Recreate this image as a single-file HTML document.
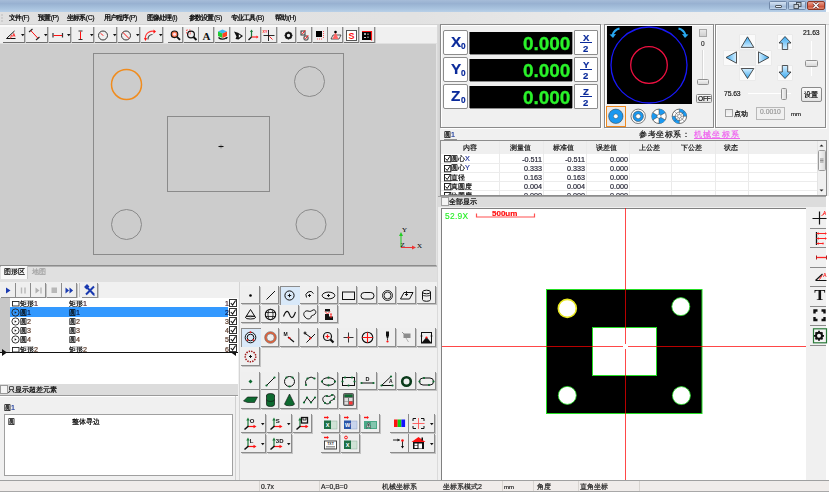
<!DOCTYPE html>
<html><head><meta charset="utf-8"><style>
*{margin:0;padding:0;box-sizing:border-box}
html,body{width:829px;height:493px;overflow:hidden;background:#fff;font-family:"Liberation Sans",sans-serif;font-size:8px;color:#000}
.a{position:absolute}
.b{position:absolute;background:#f0f0f0;border-top:1px solid #fff;border-left:1px solid #fff;border-right:1px solid #a0a0a0;border-bottom:1px solid #a0a0a0;box-shadow:1px 1px 0 #696969}
.t{position:absolute;white-space:nowrap;line-height:1;-webkit-text-stroke:0.2px currentColor;will-change:transform}
.m{position:absolute;white-space:nowrap;line-height:1;font-size:7.3px;top:14px;color:#000;letter-spacing:-0.85px;will-change:transform;-webkit-text-stroke:0.25px #000}
.m i{font-style:normal;font-size:6.9px;letter-spacing:-0.45px;margin-left:0.4px;-webkit-text-stroke:0.15px #000}
svg{position:absolute;overflow:visible}
.pnl{position:absolute;border:1px solid #a0a0a0;border-right-color:#fff;border-bottom-color:#fff;box-shadow:inset -1px -1px 0 #a0a0a0, inset 1px 1px 0 #fff}
</style></head><body>
<div class="a" style="left:0px;top:0px;width:826px;height:12px;background:linear-gradient(#a6bcd8 0,#98b1d1 30%,#a8c2de 70%,#b8d0e8 100%)"></div>
<div class="a" style="left:769px;top:1px;width:18px;height:9px;border:1px solid #7088a8;border-radius:1.5px;background:linear-gradient(#d4e2f2,#b0c6e0 50%,#9ab4d4 51%,#c0d4ea)"></div>
<div class="a" style="left:788px;top:1px;width:18px;height:9px;border:1px solid #7088a8;border-radius:1.5px;background:linear-gradient(#d4e2f2,#b0c6e0 50%,#9ab4d4 51%,#c0d4ea)"></div>
<div class="a" style="left:775px;top:5px;width:7px;height:3px;background:#e8eef6;border:1px solid #505860;border-radius:1px"></div>
<svg width="18" height="9" viewBox="0 0 18 9" style="left:788px;top:1px;"><rect x="8.5" y="1.5" width="4.5" height="4" fill="#c8d0d8" stroke="#404850" stroke-width="0.9"/><rect x="6" y="3.5" width="4.5" height="4" fill="#c8d0d8" stroke="#404850" stroke-width="0.9"/></svg>
<div class="a" style="left:807px;top:1px;width:18px;height:9px;border:1px solid #8a3828;border-radius:2px;background:linear-gradient(#e8a090,#d86850 50%,#c84830 51%,#e08870)"></div>
<svg width="18" height="9" viewBox="0 0 18 9" style="left:807px;top:1px;"><path d="M6.5 2L11.5 7M11.5 2L6.5 7" stroke="#5a2a2a" stroke-width="2.6"/><path d="M6.5 2L11.5 7M11.5 2L6.5 7" stroke="#fff" stroke-width="1.5"/></svg>
<div class="a" style="left:0px;top:11.5px;width:829px;height:13px;background:linear-gradient(90deg,#e0e0e0,#e2e2e2 50%,#ececec 80%,#f0f0f0)"></div>
<div class="a" style="left:0px;top:24px;width:829px;height:1.2px;background:#d2d2d2"></div>
<svg width="4" height="12" viewBox="0 0 4 12" style="left:0px;top:12px;"><path d="M2 2.5v1M2 5.5v1M2 8.5v1" stroke="#999" stroke-width="1"/></svg>
<div class="m" style="left:9px">文件<i>(F)</i></div>
<div class="m" style="left:38px">预置<i>(P)</i></div>
<div class="m" style="left:67px">坐标系<i>(C)</i></div>
<div class="m" style="left:104px">用户程序<i>(P)</i></div>
<div class="m" style="left:147px">图像处理<i>(I)</i></div>
<div class="m" style="left:189px">参数设置<i>(S)</i></div>
<div class="m" style="left:231px">专业工具<i>(B)</i></div>
<div class="m" style="left:275px">帮助<i>(H)</i></div>
<div class="a" style="left:0px;top:25px;width:438px;height:19px;background:#f0f0f0"></div>
<div class="a" style="left:0px;top:25px;width:438px;height:1.5px;background:#fafafa"></div>
<div class="a" style="left:3px;top:27px;width:22px;height:16px;background:#efefef;border-right:1px solid #8c8c8c;border-bottom:1px solid #6c6c6c;box-shadow:1px 0 0 #c8c8c8"></div>
<div class="a" style="left:26px;top:27px;width:22px;height:16px;background:#efefef;border-right:1px solid #8c8c8c;border-bottom:1px solid #6c6c6c;box-shadow:1px 0 0 #c8c8c8"></div>
<div class="a" style="left:49px;top:27px;width:22px;height:16px;background:#efefef;border-right:1px solid #8c8c8c;border-bottom:1px solid #6c6c6c;box-shadow:1px 0 0 #c8c8c8"></div>
<div class="a" style="left:72px;top:27px;width:22px;height:16px;background:#efefef;border-right:1px solid #8c8c8c;border-bottom:1px solid #6c6c6c;box-shadow:1px 0 0 #c8c8c8"></div>
<div class="a" style="left:95px;top:27px;width:22px;height:16px;background:#efefef;border-right:1px solid #8c8c8c;border-bottom:1px solid #6c6c6c;box-shadow:1px 0 0 #c8c8c8"></div>
<div class="a" style="left:118px;top:27px;width:22px;height:16px;background:#efefef;border-right:1px solid #8c8c8c;border-bottom:1px solid #6c6c6c;box-shadow:1px 0 0 #c8c8c8"></div>
<div class="a" style="left:141px;top:27px;width:22px;height:16px;background:#efefef;border-right:1px solid #8c8c8c;border-bottom:1px solid #6c6c6c;box-shadow:1px 0 0 #c8c8c8"></div>
<div class="a" style="left:168px;top:27px;width:15px;height:16px;background:#efefef;border-right:1px solid #8c8c8c;border-bottom:1px solid #6c6c6c;box-shadow:1px 0 0 #c8c8c8"></div>
<div class="a" style="left:184px;top:27px;width:15px;height:16px;background:#efefef;border-right:1px solid #8c8c8c;border-bottom:1px solid #6c6c6c;box-shadow:1px 0 0 #c8c8c8"></div>
<div class="a" style="left:199px;top:27px;width:15px;height:16px;background:#efefef;border-right:1px solid #8c8c8c;border-bottom:1px solid #6c6c6c;box-shadow:1px 0 0 #c8c8c8"></div>
<div class="a" style="left:215px;top:27px;width:15px;height:16px;background:#efefef;border-right:1px solid #8c8c8c;border-bottom:1px solid #6c6c6c;box-shadow:1px 0 0 #c8c8c8"></div>
<div class="a" style="left:231px;top:27px;width:15px;height:16px;background:#efefef;border-right:1px solid #8c8c8c;border-bottom:1px solid #6c6c6c;box-shadow:1px 0 0 #c8c8c8"></div>
<div class="a" style="left:246px;top:27px;width:15px;height:16px;background:#efefef;border-right:1px solid #8c8c8c;border-bottom:1px solid #6c6c6c;box-shadow:1px 0 0 #c8c8c8"></div>
<div class="a" style="left:262px;top:27px;width:15px;height:16px;background:#efefef;border-right:1px solid #8c8c8c;border-bottom:1px solid #6c6c6c;box-shadow:1px 0 0 #c8c8c8"></div>
<div class="a" style="left:281px;top:27px;width:15px;height:16px;background:#efefef;border-right:1px solid #8c8c8c;border-bottom:1px solid #6c6c6c;box-shadow:1px 0 0 #c8c8c8"></div>
<div class="a" style="left:297px;top:27px;width:15px;height:16px;background:#efefef;border-right:1px solid #8c8c8c;border-bottom:1px solid #6c6c6c;box-shadow:1px 0 0 #c8c8c8"></div>
<div class="a" style="left:313px;top:27px;width:15px;height:16px;background:#efefef;border-right:1px solid #8c8c8c;border-bottom:1px solid #6c6c6c;box-shadow:1px 0 0 #c8c8c8"></div>
<div class="a" style="left:328px;top:27px;width:15px;height:16px;background:#efefef;border-right:1px solid #8c8c8c;border-bottom:1px solid #6c6c6c;box-shadow:1px 0 0 #c8c8c8"></div>
<div class="a" style="left:344px;top:27px;width:15px;height:16px;background:#efefef;border-right:1px solid #8c8c8c;border-bottom:1px solid #6c6c6c;box-shadow:1px 0 0 #c8c8c8"></div>
<div class="a" style="left:360px;top:27px;width:15px;height:16px;background:#efefef;border-right:1px solid #8c8c8c;border-bottom:1px solid #6c6c6c;box-shadow:1px 0 0 #c8c8c8"></div>
<svg width="4" height="3" viewBox="0 0 4 3" style="left:21px;top:34px;"><path d="M0 0h3.5l-1.75 2.2z" fill="#111"/></svg>
<svg width="4" height="3" viewBox="0 0 4 3" style="left:44px;top:34px;"><path d="M0 0h3.5l-1.75 2.2z" fill="#111"/></svg>
<svg width="4" height="3" viewBox="0 0 4 3" style="left:67px;top:34px;"><path d="M0 0h3.5l-1.75 2.2z" fill="#111"/></svg>
<svg width="4" height="3" viewBox="0 0 4 3" style="left:90px;top:34px;"><path d="M0 0h3.5l-1.75 2.2z" fill="#111"/></svg>
<svg width="4" height="3" viewBox="0 0 4 3" style="left:113px;top:34px;"><path d="M0 0h3.5l-1.75 2.2z" fill="#111"/></svg>
<svg width="4" height="3" viewBox="0 0 4 3" style="left:136px;top:34px;"><path d="M0 0h3.5l-1.75 2.2z" fill="#111"/></svg>
<svg width="4" height="3" viewBox="0 0 4 3" style="left:159px;top:34px;"><path d="M0 0h3.5l-1.75 2.2z" fill="#111"/></svg>
<svg width="22" height="16" viewBox="0 0 22 16" style="left:3px;top:27px;"><path d="M3.5 11.5L11.5 4M3.5 11.5h9" stroke="#111" stroke-width="1" fill="none"/><path d="M7.5 11.5L8.5 8M9.5 9.5L10.8 6.5 12 9.5M10 8.8h1.6" stroke="#f22" stroke-width="0.9" fill="none"/></svg>
<svg width="22" height="16" viewBox="0 0 22 16" style="left:26px;top:27px;"><path d="M3 5l3.5-3M10 13l3.5-3" stroke="#222" stroke-width="1.1"/><path d="M4.8 3.6l7 7.5" stroke="#f11" stroke-width="1"/></svg>
<svg width="22" height="16" viewBox="0 0 22 16" style="left:49px;top:27px;"><path d="M4 6v4.5M13.5 6v4.5" stroke="#333" stroke-width="1.2"/><path d="M4.5 8.5h8.5" stroke="#f11" stroke-width="1"/></svg>
<svg width="22" height="16" viewBox="0 0 22 16" style="left:72px;top:27px;"><path d="M6.5 4h4M6.5 12.5h4" stroke="#333" stroke-width="1.2"/><path d="M8.5 4.5v7.5" stroke="#f11" stroke-width="1"/></svg>
<svg width="22" height="16" viewBox="0 0 22 16" style="left:95px;top:27px;"><circle cx="8" cy="8.5" r="4.5" fill="none" stroke="#222" stroke-width="0.9"/><path d="M5.8 6.3l2.4 2.4" stroke="#f11" stroke-width="1"/></svg>
<svg width="22" height="16" viewBox="0 0 22 16" style="left:118px;top:27px;"><circle cx="8" cy="8.5" r="4.5" fill="none" stroke="#222" stroke-width="0.9"/><path d="M5 5.5l6 6" stroke="#f11" stroke-width="1"/></svg>
<svg width="22" height="16" viewBox="0 0 22 16" style="left:141px;top:27px;"><path d="M4.5 12.5A7 7 0 0 1 13.5 4.5" fill="none" stroke="#f33" stroke-width="1.1"/><path d="M7 12.5A4.5 4.5 0 0 1 11.5 7.5" fill="none" stroke="#444" stroke-width="1.1"/><path d="M12.5 2.5l2.5 2-2.5 2.2z M3 11l3.2 0.3-1.8 2.7z" fill="#f11"/></svg>
<svg width="15" height="16" viewBox="0 0 15 16" style="left:168px;top:27px;"><circle cx="6.5" cy="7.3" r="3.3" fill="#fa7a50" stroke="#111" stroke-width="1.1"/><circle cx="6.5" cy="7.3" r="1.5" fill="#fde"/><path d="M9 9.8l3 3" stroke="#111" stroke-width="1.9"/></svg>
<svg width="15" height="16" viewBox="0 0 15 16" style="left:184px;top:27px;"><rect x="2.5" y="3" width="4" height="4" fill="none" stroke="#f55" stroke-width="0.9" stroke-dasharray="1.5 1"/><circle cx="7" cy="7.5" r="3.4" fill="none" stroke="#111" stroke-width="1.2"/><path d="M9.5 10l3 3" stroke="#111" stroke-width="2"/></svg>
<svg width="15" height="16" viewBox="0 0 15 16" style="left:199px;top:27px;"><text x="7.5" y="12.5" font-family="Liberation Serif" font-weight="bold" font-size="11" text-anchor="middle" fill="#111">A</text></svg>
<svg width="15" height="16" viewBox="0 0 15 16" style="left:215px;top:27px;"><path d="M3 4.5l4.5-2 4.5 2-4.5 2z" fill="#39b8f0"/><path d="M3 4.5v4.5l4.5 2V6.5z" fill="#22cc33"/><path d="M12 4.5v4.5l-4.5 2V6.5z" fill="#ff4020"/><path d="M3.5 10.5q3 3 8 0.5" stroke="#111" stroke-width="1.3" fill="none"/><path d="M10.5 10l2.5 0.3-1.5 2z" fill="#111"/></svg>
<svg width="15" height="16" viewBox="0 0 15 16" style="left:231px;top:27px;"><path d="M3 4.5l4 1.2 5 3.3-4.5 3.5-3-0.5 1-2.5z" fill="#111"/><path d="M7.8 7.2l2.2 1.8-2.2 1.8z" fill="#fff"/></svg>
<svg width="15" height="16" viewBox="0 0 15 16" style="left:246px;top:27px;"><path d="M5.5 10V3.5" stroke="#1a7a3a" stroke-width="1.2"/><path d="M4 5l1.5-2.5L7 5z" fill="#1a7a3a"/><path d="M5.5 10h6" stroke="#f22" stroke-width="1.2"/><path d="M10.5 8.5l2 1.5-2 1.5z" fill="#f22"/><path d="M5.5 10l-3 3" stroke="#111" stroke-width="1.3"/></svg>
<svg width="15" height="16" viewBox="0 0 15 16" style="left:262px;top:27px;"><path d="M6.5 3v11M1.5 8.5h11" stroke="#111" stroke-width="0.9"/><path d="M7.5 9.5l3 3" stroke="#f22" stroke-width="1"/><text x="0.5" y="5.5" font-size="3.8" fill="#f22" font-weight="bold">XY</text></svg>
<svg width="15" height="16" viewBox="0 0 15 16" style="left:281px;top:27px;"><circle cx="7.5" cy="8.5" r="2.6" fill="none" stroke="#111" stroke-width="1.8"/><path d="M7.5 4.5v1.5M7.5 11v1.5M3.5 8.5h1.5M10 8.5h1.5M4.7 5.7l1 1M9.3 10.3l1 1M10.3 5.7l-1 1M5.7 10.3l-1 1" stroke="#111" stroke-width="1.6"/></svg>
<svg width="15" height="16" viewBox="0 0 15 16" style="left:297px;top:27px;"><rect x="4" y="4" width="4" height="4" fill="none" stroke="#333" stroke-width="1"/><rect x="7" y="9" width="4" height="4" fill="none" stroke="#333" stroke-width="1" rx="1"/><path d="M4.5 5.5l1.2 1.2 2.5-3.5M7.5 10.5l1.2 1.2 2.5-3.5" stroke="#f22" stroke-width="1" fill="none"/></svg>
<svg width="15" height="16" viewBox="0 0 15 16" style="left:313px;top:27px;"><rect x="3" y="4" width="6" height="6" fill="#000"/><path d="M10.5 4v7M4 12h6" stroke="#f44" stroke-width="0.9" stroke-dasharray="1 1"/></svg>
<svg width="15" height="16" viewBox="0 0 15 16" style="left:328px;top:27px;"><path d="M3 12l2-4h8l-2 4z" fill="none" stroke="#333" stroke-width="0.8"/><path d="M7.5 5l3 7h-6z" fill="#f66"/><circle cx="7.5" cy="5" r="1.3" fill="#000"/></svg>
<svg width="15" height="16" viewBox="0 0 15 16" style="left:344px;top:27px;"><rect x="2.5" y="3.5" width="10" height="10" fill="#fff" stroke="#555" stroke-width="1"/><text x="7.5" y="12" font-size="9" font-weight="bold" text-anchor="middle" fill="#f11">S</text></svg>
<svg width="15" height="16" viewBox="0 0 15 16" style="left:360px;top:27px;"><rect x="2" y="4" width="9" height="9" fill="#000"/><path d="M2 4.5h9.5v9" stroke="#f11" stroke-width="1.2" fill="none"/><path d="M4 7h2M5 6v2M4 10.5h2M8 6.5v1.5M8 9.5v1.5" stroke="#fff" stroke-width="0.8"/></svg>
<div class="a" style="left:0px;top:43px;width:438px;height:1px;background:#e0e0e0"></div>
<div class="a" style="left:0px;top:44px;width:437px;height:222px;background:#cccccc;border-right:1px solid #e4e4e4;border-bottom:1px solid #8c8c8c"></div>
<svg width="438" height="222" viewBox="0 0 438 222" style="left:0px;top:44px;">
 <rect x="93.5" y="9.5" width="250" height="201" fill="none" stroke="#8a8a8a" stroke-width="1"/>
 <rect x="167.5" y="72.5" width="102" height="75" fill="none" stroke="#8a8a8a" stroke-width="1"/>
 <circle cx="126.5" cy="40.5" r="15" fill="none" stroke="#f08c1e" stroke-width="1.5"/>
 <circle cx="309.5" cy="37.5" r="15" fill="none" stroke="#8a8a8a" stroke-width="1"/>
 <circle cx="126.5" cy="180.5" r="15" fill="none" stroke="#8a8a8a" stroke-width="1"/>
 <circle cx="311" cy="180.5" r="15" fill="none" stroke="#8a8a8a" stroke-width="1"/>
 <path d="M221 100.5v4" stroke="#888" stroke-width="1"/><path d="M218.5 102.5h5" stroke="#111" stroke-width="1.1"/>
 <path d="M401 203.5v-13" stroke="#2c2" stroke-width="1"/>
 <path d="M399 192l2-4 2 4z" fill="#2c2"/>
 <path d="M401 203.5h13" stroke="#e33" stroke-width="1"/>
 <path d="M412 201.5l4 2-4 2z" fill="#e33"/>
 <text x="402" y="188" font-size="7" font-family="Liberation Serif">Y</text>
 <text x="400.5" y="203" font-size="7" font-family="Liberation Serif">Z</text>
 <text x="417" y="203.5" font-size="7" font-family="Liberation Serif">X</text>
</svg>
<div class="a" style="left:0px;top:266px;width:437px;height:0.5px;background:#b0b0b0"></div>
<div class="a" style="left:0px;top:266.5px;width:437px;height:15.5px;background:#e0e0e0"></div>
<div class="a" style="left:1px;top:266px;width:27px;height:13px;background:#f8f8f8;border-right:1px solid #c8c8c8"></div>
<div class="t" style="left:4px;top:268px;font-size:7.2px">图形区</div>
<div class="t" style="left:32px;top:268px;font-size:7.2px;color:#a0a0a0">地图</div>
<div class="a" style="left:0px;top:282px;width:238px;height:198px;background:#f0f0f0"></div>
<div class="a" style="left:1px;top:283px;width:15px;height:15px;background:#efefef;border-right:1px solid #8c8c8c;border-bottom:1px solid #8c8c8c;box-shadow:1px 1px 0 #c4c4c4"></div>
<div class="a" style="left:16px;top:283px;width:15px;height:15px;background:#efefef;border-right:1px solid #8c8c8c;border-bottom:1px solid #8c8c8c;box-shadow:1px 1px 0 #c4c4c4"></div>
<div class="a" style="left:31px;top:283px;width:15px;height:15px;background:#efefef;border-right:1px solid #8c8c8c;border-bottom:1px solid #8c8c8c;box-shadow:1px 1px 0 #c4c4c4"></div>
<div class="a" style="left:47px;top:283px;width:15px;height:15px;background:#efefef;border-right:1px solid #8c8c8c;border-bottom:1px solid #8c8c8c;box-shadow:1px 1px 0 #c4c4c4"></div>
<div class="a" style="left:62px;top:283px;width:15px;height:15px;background:#efefef;border-right:1px solid #8c8c8c;border-bottom:1px solid #8c8c8c;box-shadow:1px 1px 0 #c4c4c4"></div>
<div class="a" style="left:82px;top:283px;width:16px;height:15px;background:#efefef;border-right:1px solid #8c8c8c;border-bottom:1px solid #8c8c8c;box-shadow:1px 1px 0 #c4c4c4"></div>
<div class="a" style="left:79px;top:283px;width:1px;height:14px;background:#c8c8c8"></div>
<svg width="15" height="15" viewBox="0 0 15 15" style="left:1px;top:283px;"><path d="M5 4.5v6l4.5-3z" fill="#1a3ab0"/></svg>
<svg width="15" height="15" viewBox="0 0 15 15" style="left:16px;top:283px;"><path d="M5.5 4.5v6M9 4.5v6" stroke="#b8b8b8" stroke-width="1.4"/></svg>
<svg width="15" height="15" viewBox="0 0 15 15" style="left:31px;top:283px;"><path d="M4.5 4.5v6l4-3z" fill="#b0b0b0"/><path d="M10 4.5v6" stroke="#b0b0b0" stroke-width="1.2"/></svg>
<svg width="15" height="15" viewBox="0 0 15 15" style="left:47px;top:283px;"><rect x="4.5" y="4.5" width="5.5" height="5.5" fill="#b8b8b8"/></svg>
<svg width="15" height="15" viewBox="0 0 15 15" style="left:62px;top:283px;"><path d="M3.5 4.5v6l3.6-3zM7.5 4.5v6l3.6-3z" fill="#1a3ab0"/></svg>
<svg width="16" height="15" viewBox="0 0 16 15" style="left:82px;top:283px;"><path d="M4 3.5l8 8M12 3.5l-8 8" stroke="#1a3ab0" stroke-width="2"/><path d="M3 4l2-2 1.5 1.5-2 2zM10 10l2.5 2.5" stroke="#1a3ab0" stroke-width="1.3" fill="#1a3ab0"/></svg>
<div class="a" style="left:0px;top:298px;width:238px;height:87px;background:#fff"></div>
<div class="a" style="left:0px;top:298px;width:10px;height:55px;background:#c8c8c8"></div>
<div class="a" style="left:10px;top:307px;width:218px;height:10px;background:#3399ff"></div>
<div class="a" style="left:0px;top:352px;width:238px;height:1px;background:#111"></div>
<svg width="238" height="8" viewBox="0 0 238 8" style="left:0px;top:349px;"><path d="M2 0l5 3.5-5 3.5z M236 0l-5 3.5 5 3.5z" fill="#111"/></svg>
<svg width="9" height="9" viewBox="0 0 9 9" style="left:11px;top:298.0px;"><rect x="1.5" y="3.5" width="6.5" height="4.5" fill="none" stroke="#222" stroke-width="0.9"/></svg>
<div class="t" style="left:20px;top:300.0px;font-size:7.2px">矩形<span style="color:#4a2a3a">1</span></div>
<div class="t" style="left:69px;top:300.0px;font-size:7.2px">矩形<span style="color:#4a2a3a">1</span></div>
<div class="t" style="left:224.5px;top:300.0px;font-size:7px"><span style="color:#4a2a3a">1</span></div>
<svg width="8" height="8" viewBox="0 0 8 8" style="left:229px;top:298.5px;"><rect x="0.5" y="0.5" width="7" height="7" fill="#fff" stroke="#333" stroke-width="1"/><path d="M1.8 4l1.8 2 3-4.5" stroke="#111" stroke-width="1.1" fill="none"/></svg>
<svg width="9" height="9" viewBox="0 0 9 9" style="left:11px;top:307.1px;"><circle cx="4.5" cy="5.5" r="3.6" fill="none" stroke="#222" stroke-width="0.9"/><path d="M3.7 4.3l2 1.2-2 1.2z" fill="#222"/></svg>
<div class="t" style="left:20px;top:309.1px;font-size:7.2px">圆<span style="color:#0a1a4a">1</span></div>
<div class="t" style="left:69px;top:309.1px;font-size:7.2px">圆<span style="color:#0a1a4a">1</span></div>
<div class="t" style="left:224.5px;top:309.1px;font-size:7px"><span style="color:#0a1a4a">2</span></div>
<svg width="8" height="8" viewBox="0 0 8 8" style="left:229px;top:307.6px;"><rect x="0.5" y="0.5" width="7" height="7" fill="#fff" stroke="#333" stroke-width="1"/><path d="M1.8 4l1.8 2 3-4.5" stroke="#111" stroke-width="1.1" fill="none"/></svg>
<svg width="9" height="9" viewBox="0 0 9 9" style="left:11px;top:316.2px;"><circle cx="4.5" cy="5.5" r="3.6" fill="none" stroke="#222" stroke-width="0.9"/><path d="M3.7 4.3l2 1.2-2 1.2z" fill="#222"/></svg>
<div class="t" style="left:20px;top:318.2px;font-size:7.2px">圆<span style="color:#5a3a2a">2</span></div>
<div class="t" style="left:69px;top:318.2px;font-size:7.2px">圆<span style="color:#5a3a2a">2</span></div>
<div class="t" style="left:224.5px;top:318.2px;font-size:7px"><span style="color:#5a3a2a">3</span></div>
<svg width="8" height="8" viewBox="0 0 8 8" style="left:229px;top:316.7px;"><rect x="0.5" y="0.5" width="7" height="7" fill="#fff" stroke="#333" stroke-width="1"/><path d="M1.8 4l1.8 2 3-4.5" stroke="#111" stroke-width="1.1" fill="none"/></svg>
<svg width="9" height="9" viewBox="0 0 9 9" style="left:11px;top:325.3px;"><circle cx="4.5" cy="5.5" r="3.6" fill="none" stroke="#222" stroke-width="0.9"/><path d="M3.7 4.3l2 1.2-2 1.2z" fill="#222"/></svg>
<div class="t" style="left:20px;top:327.3px;font-size:7.2px">圆<span style="color:#5a3a2a">3</span></div>
<div class="t" style="left:69px;top:327.3px;font-size:7.2px">圆<span style="color:#5a3a2a">3</span></div>
<div class="t" style="left:224.5px;top:327.3px;font-size:7px"><span style="color:#5a3a2a">4</span></div>
<svg width="8" height="8" viewBox="0 0 8 8" style="left:229px;top:325.8px;"><rect x="0.5" y="0.5" width="7" height="7" fill="#fff" stroke="#333" stroke-width="1"/><path d="M1.8 4l1.8 2 3-4.5" stroke="#111" stroke-width="1.1" fill="none"/></svg>
<svg width="9" height="9" viewBox="0 0 9 9" style="left:11px;top:334.4px;"><circle cx="4.5" cy="5.5" r="3.6" fill="none" stroke="#222" stroke-width="0.9"/><path d="M3.7 4.3l2 1.2-2 1.2z" fill="#222"/></svg>
<div class="t" style="left:20px;top:336.4px;font-size:7.2px">圆<span style="color:#5a3a2a">4</span></div>
<div class="t" style="left:69px;top:336.4px;font-size:7.2px">圆<span style="color:#5a3a2a">4</span></div>
<div class="t" style="left:224.5px;top:336.4px;font-size:7px"><span style="color:#5a3a2a">5</span></div>
<svg width="8" height="8" viewBox="0 0 8 8" style="left:229px;top:334.9px;"><rect x="0.5" y="0.5" width="7" height="7" fill="#fff" stroke="#333" stroke-width="1"/><path d="M1.8 4l1.8 2 3-4.5" stroke="#111" stroke-width="1.1" fill="none"/></svg>
<svg width="9" height="9" viewBox="0 0 9 9" style="left:11px;top:343.5px;"><rect x="1.5" y="3.5" width="6.5" height="4.5" fill="none" stroke="#222" stroke-width="0.9"/></svg>
<div class="t" style="left:20px;top:345.5px;font-size:7.2px">矩形<span style="color:#5a3a2a">2</span></div>
<div class="t" style="left:69px;top:345.5px;font-size:7.2px">矩形<span style="color:#5a3a2a">2</span></div>
<div class="t" style="left:224.5px;top:345.5px;font-size:7px"><span style="color:#5a3a2a">6</span></div>
<svg width="8" height="8" viewBox="0 0 8 8" style="left:229px;top:344.0px;"><rect x="0.5" y="0.5" width="7" height="7" fill="#fff" stroke="#333" stroke-width="1"/><path d="M1.8 4l1.8 2 3-4.5" stroke="#111" stroke-width="1.1" fill="none"/></svg>
<div class="a" style="left:0px;top:384px;width:238px;height:11px;background:#dcdcdc"></div>
<svg width="8" height="9" viewBox="0 0 8 9" style="left:0px;top:385px;"><rect x="0.5" y="0.5" width="7" height="8" fill="#f4f4f4" stroke="#9a9a9a"/></svg>
<div class="t" style="left:8px;top:386px;font-size:7.2px">只显示超差元素</div>
<div class="a" style="left:0px;top:395px;width:238px;height:1px;background:#9a9a9a"></div>
<div class="a" style="left:0px;top:396px;width:238px;height:1px;background:#fff"></div>
<div class="t" style="left:4px;top:403.8px;font-size:7.2px">圆<span style="color:#1a3a9a">1</span></div>
<div class="a" style="left:4px;top:414px;width:229px;height:62px;background:#fff;border:1px solid #a0a0a0"></div>
<div class="t" style="left:8px;top:418px;font-size:7.2px">圆</div>
<div class="t" style="left:72px;top:418px;font-size:7.2px">整体寻边</div>
<div class="a" style="left:235px;top:396px;width:1px;height:84px;background:#d0d0d0"></div>
<div class="a" style="left:0px;top:480px;width:438px;height:1px;background:#a8a8a8"></div>
<div class="a" style="left:238px;top:282px;width:199px;height:198px;background:#f0f0f0"></div>
<div class="a" style="left:238.5px;top:282px;width:1px;height:198px;background:#d4d4d4"></div>
<div class="a" style="left:241.0px;top:285.5px;width:18.6px;height:18.6px;background:#efefef;border-right:1px solid #8c8c8c;border-bottom:1px solid #8c8c8c;box-shadow:1px 1px 0 #c4c4c4"></div>
<svg width="19" height="19" viewBox="0 0 19 19" style="left:241.0px;top:285.5px;"><circle cx="9.5" cy="9.5" r="1.3" fill="#000"/></svg>
<div class="a" style="left:260.6px;top:285.5px;width:18.6px;height:18.6px;background:#efefef;border-right:1px solid #8c8c8c;border-bottom:1px solid #8c8c8c;box-shadow:1px 1px 0 #c4c4c4"></div>
<svg width="19" height="19" viewBox="0 0 19 19" style="left:260.6px;top:285.5px;"><path d="M5.5 13.5L14 5" stroke="#111" stroke-width="1"/></svg>
<div class="a" style="left:280.1px;top:285.5px;width:19.6px;height:19.6px;background:#d9e9f9;border-top:1.5px solid #8c8c8c;border-left:1.5px solid #8c8c8c"></div>
<svg width="19" height="19" viewBox="0 0 19 19" style="left:280.1px;top:285.5px;"><circle cx="9.5" cy="9.5" r="4.6" fill="none" stroke="#111" stroke-width="1"/><path d="M9.5 7.8v3.4M7.8 9.5h3.4" stroke="#111" stroke-width="1"/></svg>
<div class="a" style="left:299.6px;top:285.5px;width:18.6px;height:18.6px;background:#efefef;border-right:1px solid #8c8c8c;border-bottom:1px solid #8c8c8c;box-shadow:1px 1px 0 #c4c4c4"></div>
<svg width="19" height="19" viewBox="0 0 19 19" style="left:299.6px;top:285.5px;"><path d="M6.5 11.5A3.8 3.8 0 0 1 13.5 7.5" fill="none" stroke="#111" stroke-width="1"/><path d="M9.5 8v3M8 9.5h3" stroke="#111" stroke-width="1"/></svg>
<div class="a" style="left:319.2px;top:285.5px;width:18.6px;height:18.6px;background:#efefef;border-right:1px solid #8c8c8c;border-bottom:1px solid #8c8c8c;box-shadow:1px 1px 0 #c4c4c4"></div>
<svg width="19" height="19" viewBox="0 0 19 19" style="left:319.2px;top:285.5px;"><ellipse cx="9.5" cy="9.5" rx="6.3" ry="3.4" fill="none" stroke="#111" stroke-width="1"/><path d="M9.5 8v3M8 9.5h3" stroke="#111" stroke-width="1"/></svg>
<div class="a" style="left:338.8px;top:285.5px;width:18.6px;height:18.6px;background:#efefef;border-right:1px solid #8c8c8c;border-bottom:1px solid #8c8c8c;box-shadow:1px 1px 0 #c4c4c4"></div>
<svg width="19" height="19" viewBox="0 0 19 19" style="left:338.8px;top:285.5px;"><rect x="3.5" y="6" width="12" height="7.5" fill="none" stroke="#111" stroke-width="1"/></svg>
<div class="a" style="left:358.3px;top:285.5px;width:18.6px;height:18.6px;background:#efefef;border-right:1px solid #8c8c8c;border-bottom:1px solid #8c8c8c;box-shadow:1px 1px 0 #c4c4c4"></div>
<svg width="19" height="19" viewBox="0 0 19 19" style="left:358.3px;top:285.5px;"><rect x="3" y="6.5" width="13" height="6.5" rx="3.2" fill="none" stroke="#111" stroke-width="1"/></svg>
<div class="a" style="left:377.9px;top:285.5px;width:18.6px;height:18.6px;background:#efefef;border-right:1px solid #8c8c8c;border-bottom:1px solid #8c8c8c;box-shadow:1px 1px 0 #c4c4c4"></div>
<svg width="19" height="19" viewBox="0 0 19 19" style="left:377.9px;top:285.5px;"><circle cx="9.5" cy="9.5" r="5" fill="none" stroke="#111" stroke-width="0.9"/><circle cx="9.5" cy="9.5" r="3.5" fill="none" stroke="#111" stroke-width="0.9"/></svg>
<div class="a" style="left:397.4px;top:285.5px;width:18.6px;height:18.6px;background:#efefef;border-right:1px solid #8c8c8c;border-bottom:1px solid #8c8c8c;box-shadow:1px 1px 0 #c4c4c4"></div>
<svg width="19" height="19" viewBox="0 0 19 19" style="left:397.4px;top:285.5px;"><path d="M3.5 13l3.5-6.5h9l-3.5 6.5z" fill="none" stroke="#111" stroke-width="1"/><path d="M9.5 5v5M8 8.5h3" stroke="#111" stroke-width="0.9"/></svg>
<div class="a" style="left:417.0px;top:285.5px;width:18.6px;height:18.6px;background:#efefef;border-right:1px solid #8c8c8c;border-bottom:1px solid #8c8c8c;box-shadow:1px 1px 0 #c4c4c4"></div>
<svg width="19" height="19" viewBox="0 0 19 19" style="left:417.0px;top:285.5px;"><ellipse cx="9.5" cy="6" rx="4" ry="1.8" fill="none" stroke="#111" stroke-width="1"/><path d="M5.5 6v7.5M13.5 6v7.5" stroke="#111" stroke-width="1"/><path d="M5.5 13.5A4 1.8 0 0 0 13.5 13.5" fill="none" stroke="#111" stroke-width="1"/><path d="M5.5 8.5A4 1.5 0 0 0 13.5 8.5" fill="none" stroke="#111" stroke-width="0.8"/></svg>
<div class="a" style="left:241.0px;top:304.6px;width:18.6px;height:18.6px;background:#efefef;border-right:1px solid #8c8c8c;border-bottom:1px solid #8c8c8c;box-shadow:1px 1px 0 #c4c4c4"></div>
<svg width="19" height="19" viewBox="0 0 19 19" style="left:241.0px;top:304.6px;"><path d="M9.5 4.5L4.5 12.5M9.5 4.5L14.5 12.5" stroke="#111" stroke-width="1"/><ellipse cx="9.5" cy="12.5" rx="5" ry="1.5" fill="none" stroke="#111" stroke-width="1"/><path d="M5 11q4.5 1.5 9 0" stroke="#111" stroke-width="0.8" fill="none"/></svg>
<div class="a" style="left:260.6px;top:304.6px;width:18.6px;height:18.6px;background:#efefef;border-right:1px solid #8c8c8c;border-bottom:1px solid #8c8c8c;box-shadow:1px 1px 0 #c4c4c4"></div>
<svg width="19" height="19" viewBox="0 0 19 19" style="left:260.6px;top:304.6px;"><circle cx="9.5" cy="9.5" r="5.2" fill="none" stroke="#111" stroke-width="1.1"/><ellipse cx="9.5" cy="9.5" rx="2.5" ry="5.2" fill="none" stroke="#111" stroke-width="0.8"/><path d="M4.5 7.5h10M4.5 11.5h10" stroke="#111" stroke-width="0.8"/></svg>
<div class="a" style="left:280.1px;top:304.6px;width:18.6px;height:18.6px;background:#efefef;border-right:1px solid #8c8c8c;border-bottom:1px solid #8c8c8c;box-shadow:1px 1px 0 #c4c4c4"></div>
<svg width="19" height="19" viewBox="0 0 19 19" style="left:280.1px;top:304.6px;"><path d="M3.5 11.5C6 5 8 5 9.5 9.5S13 14 15.5 7" fill="none" stroke="#111" stroke-width="1.1"/></svg>
<div class="a" style="left:299.6px;top:304.6px;width:18.6px;height:18.6px;background:#efefef;border-right:1px solid #8c8c8c;border-bottom:1px solid #8c8c8c;box-shadow:1px 1px 0 #c4c4c4"></div>
<svg width="19" height="19" viewBox="0 0 19 19" style="left:299.6px;top:304.6px;"><path d="M5 12c-3-3 0-7 3-6s3 0 5-1 4 2 2 4-4 1-4 3-4 3-6 0z" fill="none" stroke="#111" stroke-width="1"/></svg>
<div class="a" style="left:319.2px;top:304.6px;width:18.6px;height:18.6px;background:#efefef;border-right:1px solid #8c8c8c;border-bottom:1px solid #8c8c8c;box-shadow:1px 1px 0 #c4c4c4"></div>
<svg width="19" height="19" viewBox="0 0 19 19" style="left:319.2px;top:304.6px;"><rect x="6" y="4" width="5" height="2.5" fill="#111"/><path d="M6 6.5l2.5 2.5 2.5-2.5" fill="none" stroke="#f22" stroke-width="0.9"/><rect x="6" y="9" width="4" height="6" fill="#111"/><rect x="8" y="11.5" width="6" height="3.5" fill="#111"/><path d="M12 9v3M11 9h2M11 12h2" stroke="#f22" stroke-width="0.9"/></svg>
<div class="a" style="left:241.0px;top:328.3px;width:19.6px;height:19.6px;background:#d9e9f9;border-top:1.5px solid #8c8c8c;border-left:1.5px solid #8c8c8c"></div>
<svg width="19" height="19" viewBox="0 0 19 19" style="left:241.0px;top:328.3px;"><circle cx="9.5" cy="9.5" r="5.3" fill="none" stroke="#111" stroke-width="1"/><circle cx="9.5" cy="9.5" r="3.3" fill="none" stroke="#111" stroke-width="1"/><circle cx="9.5" cy="4.2" r="0.9" fill="#f22"/><circle cx="6.5" cy="12" r="0.9" fill="#f22"/><circle cx="12.5" cy="12" r="0.9" fill="#f22"/></svg>
<div class="a" style="left:260.6px;top:328.3px;width:18.6px;height:18.6px;background:#efefef;border-right:1px solid #8c8c8c;border-bottom:1px solid #8c8c8c;box-shadow:1px 1px 0 #c4c4c4"></div>
<svg width="19" height="19" viewBox="0 0 19 19" style="left:260.6px;top:328.3px;"><circle cx="9.5" cy="9.5" r="4.8" fill="none" stroke="#e0603a" stroke-width="2"/><circle cx="9.5" cy="9.5" r="5.9" fill="none" stroke="#555" stroke-width="0.5"/><circle cx="9.5" cy="9.5" r="3.7" fill="none" stroke="#555" stroke-width="0.5"/></svg>
<div class="a" style="left:280.1px;top:328.3px;width:18.6px;height:18.6px;background:#efefef;border-right:1px solid #8c8c8c;border-bottom:1px solid #8c8c8c;box-shadow:1px 1px 0 #c4c4c4"></div>
<svg width="19" height="19" viewBox="0 0 19 19" style="left:280.1px;top:328.3px;"><text x="3.5" y="7.5" font-size="5" font-weight="bold" fill="#111">M</text><path d="M8 9l6 5" stroke="#111" stroke-width="1.2"/><circle cx="9.5" cy="10" r="1.1" fill="#f11"/></svg>
<div class="a" style="left:299.6px;top:328.3px;width:18.6px;height:18.6px;background:#efefef;border-right:1px solid #8c8c8c;border-bottom:1px solid #8c8c8c;box-shadow:1px 1px 0 #c4c4c4"></div>
<svg width="19" height="19" viewBox="0 0 19 19" style="left:299.6px;top:328.3px;"><path d="M4.5 5l7 5M15 6l-8.5 8.5M5 3.5v3M3.5 5h3" stroke="#111" stroke-width="1"/><circle cx="10.2" cy="10.3" r="1.1" fill="#f11"/></svg>
<div class="a" style="left:319.2px;top:328.3px;width:18.6px;height:18.6px;background:#efefef;border-right:1px solid #8c8c8c;border-bottom:1px solid #8c8c8c;box-shadow:1px 1px 0 #c4c4c4"></div>
<svg width="19" height="19" viewBox="0 0 19 19" style="left:319.2px;top:328.3px;"><circle cx="8.5" cy="8.5" r="4" fill="none" stroke="#111" stroke-width="1.2"/><path d="M8.5 6.5v4M6.5 8.5h4" stroke="#f11" stroke-width="1.2"/><path d="M11.5 11.5l3 3" stroke="#111" stroke-width="2.2"/></svg>
<div class="a" style="left:338.8px;top:328.3px;width:18.6px;height:18.6px;background:#efefef;border-right:1px solid #8c8c8c;border-bottom:1px solid #8c8c8c;box-shadow:1px 1px 0 #c4c4c4"></div>
<svg width="19" height="19" viewBox="0 0 19 19" style="left:338.8px;top:328.3px;"><path d="M9.5 4.5v10M4.5 9.5h10" stroke="#333" stroke-width="1"/><circle cx="9.5" cy="9.5" r="1.1" fill="#f11"/></svg>
<div class="a" style="left:358.3px;top:328.3px;width:18.6px;height:18.6px;background:#efefef;border-right:1px solid #8c8c8c;border-bottom:1px solid #8c8c8c;box-shadow:1px 1px 0 #c4c4c4"></div>
<svg width="19" height="19" viewBox="0 0 19 19" style="left:358.3px;top:328.3px;"><circle cx="9.5" cy="9.5" r="5.3" fill="none" stroke="#111" stroke-width="1.1"/><path d="M9.5 4.5v10M4.5 9.5h10" stroke="#f11" stroke-width="1.1"/></svg>
<div class="a" style="left:377.9px;top:328.3px;width:18.6px;height:18.6px;background:#efefef;border-right:1px solid #8c8c8c;border-bottom:1px solid #8c8c8c;box-shadow:1px 1px 0 #c4c4c4"></div>
<svg width="19" height="19" viewBox="0 0 19 19" style="left:377.9px;top:328.3px;"><path d="M8 3.5h3v4l-1 3h-1l-1-3z" fill="#111"/><path d="M9.5 10.5v2" stroke="#111" stroke-width="0.8"/><circle cx="9.5" cy="13.5" r="1.1" fill="#f11"/></svg>
<div class="a" style="left:397.4px;top:328.3px;width:18.6px;height:18.6px;background:#efefef;border-right:1px solid #8c8c8c;border-bottom:1px solid #8c8c8c;box-shadow:1px 1px 0 #c4c4c4"></div>
<svg width="19" height="19" viewBox="0 0 19 19" style="left:397.4px;top:328.3px;"><path d="M5 4l2 2" stroke="#888" stroke-width="0.9"/><rect x="6.5" y="5.5" width="7" height="4.5" fill="#8c8c8c"/><path d="M9 10l2.5 4" stroke="#aaa" stroke-width="0.9"/></svg>
<div class="a" style="left:417.0px;top:328.3px;width:18.6px;height:18.6px;background:#efefef;border-right:1px solid #8c8c8c;border-bottom:1px solid #8c8c8c;box-shadow:1px 1px 0 #c4c4c4"></div>
<svg width="19" height="19" viewBox="0 0 19 19" style="left:417.0px;top:328.3px;"><rect x="4.5" y="4.5" width="10" height="10.5" fill="none" stroke="#111" stroke-width="1"/><path d="M4.5 15l5-6 5 6z" fill="#111"/><circle cx="9.5" cy="9.5" r="1.1" fill="#f11"/><path d="M3.5 8h2M13.5 8h2" stroke="#111" stroke-width="0.8"/></svg>
<div class="a" style="left:241.0px;top:347.2px;width:18.6px;height:18.6px;background:#efefef;border-right:1px solid #8c8c8c;border-bottom:1px solid #8c8c8c;box-shadow:1px 1px 0 #c4c4c4"></div>
<svg width="19" height="19" viewBox="0 0 19 19" style="left:241.0px;top:347.2px;"><circle cx="9.5" cy="9.5" r="5.3" fill="none" stroke="#a01818" stroke-width="1.5" stroke-dasharray="1.4 1.1"/><path d="M9.5 8v3M8 9.5h3" stroke="#111" stroke-width="1"/></svg>
<div class="a" style="left:241.0px;top:371.5px;width:18.6px;height:18.6px;background:#efefef;border-right:1px solid #8c8c8c;border-bottom:1px solid #8c8c8c;box-shadow:1px 1px 0 #c4c4c4"></div>
<svg width="19" height="19" viewBox="0 0 19 19" style="left:241.0px;top:371.5px;"><path d="M9.5 7.5l2 2-2 2-2-2z" fill="#0e6a30"/></svg>
<div class="a" style="left:260.6px;top:371.5px;width:18.6px;height:18.6px;background:#efefef;border-right:1px solid #8c8c8c;border-bottom:1px solid #8c8c8c;box-shadow:1px 1px 0 #c4c4c4"></div>
<svg width="19" height="19" viewBox="0 0 19 19" style="left:260.6px;top:371.5px;"><path d="M5.5 13.5L13.5 5.5" stroke="#111" stroke-width="1"/><circle cx="5.5" cy="13.5" r="1.1" fill="#0e6a30"/><circle cx="13.5" cy="5.5" r="1.1" fill="#0e6a30"/></svg>
<div class="a" style="left:280.1px;top:371.5px;width:18.6px;height:18.6px;background:#efefef;border-right:1px solid #8c8c8c;border-bottom:1px solid #8c8c8c;box-shadow:1px 1px 0 #c4c4c4"></div>
<svg width="19" height="19" viewBox="0 0 19 19" style="left:280.1px;top:371.5px;"><circle cx="9.5" cy="9.5" r="5" fill="none" stroke="#111" stroke-width="1"/><circle cx="6.5" cy="5.5" r="1.1" fill="#0e6a30"/><circle cx="12.5" cy="5.5" r="1.1" fill="#0e6a30"/><circle cx="9.5" cy="14.5" r="1.1" fill="#0e6a30"/></svg>
<div class="a" style="left:299.6px;top:371.5px;width:18.6px;height:18.6px;background:#efefef;border-right:1px solid #8c8c8c;border-bottom:1px solid #8c8c8c;box-shadow:1px 1px 0 #c4c4c4"></div>
<svg width="19" height="19" viewBox="0 0 19 19" style="left:299.6px;top:371.5px;"><path d="M6 13A5.5 5.5 0 0 1 14.5 6.5" fill="none" stroke="#111" stroke-width="1"/><circle cx="6" cy="13" r="1.1" fill="#0e6a30"/><circle cx="7.5" cy="6.5" r="1.1" fill="#0e6a30"/><circle cx="14.5" cy="6.5" r="1.1" fill="#0e6a30"/></svg>
<div class="a" style="left:319.2px;top:371.5px;width:18.6px;height:18.6px;background:#efefef;border-right:1px solid #8c8c8c;border-bottom:1px solid #8c8c8c;box-shadow:1px 1px 0 #c4c4c4"></div>
<svg width="19" height="19" viewBox="0 0 19 19" style="left:319.2px;top:371.5px;"><ellipse cx="9.5" cy="9.5" rx="6.5" ry="3.8" fill="none" stroke="#111" stroke-width="1"/><circle cx="3" cy="9.5" r="1.1" fill="#0e6a30"/><circle cx="16" cy="9.5" r="1.1" fill="#0e6a30"/><circle cx="9.5" cy="5.7" r="1.1" fill="#0e6a30"/><circle cx="9.5" cy="13.3" r="1.1" fill="#0e6a30"/></svg>
<div class="a" style="left:338.8px;top:371.5px;width:18.6px;height:18.6px;background:#efefef;border-right:1px solid #8c8c8c;border-bottom:1px solid #8c8c8c;box-shadow:1px 1px 0 #c4c4c4"></div>
<svg width="19" height="19" viewBox="0 0 19 19" style="left:338.8px;top:371.5px;"><rect x="3.5" y="5.5" width="12" height="8" fill="none" stroke="#111" stroke-width="1"/><circle cx="3.5" cy="9.5" r="1.1" fill="#0e6a30"/><circle cx="15.5" cy="9.5" r="1.1" fill="#0e6a30"/><circle cx="6" cy="5.5" r="1.1" fill="#0e6a30"/><circle cx="13" cy="5.5" r="1.1" fill="#0e6a30"/><circle cx="9.5" cy="13.5" r="1.1" fill="#0e6a30"/></svg>
<div class="a" style="left:358.3px;top:371.5px;width:18.6px;height:18.6px;background:#efefef;border-right:1px solid #8c8c8c;border-bottom:1px solid #8c8c8c;box-shadow:1px 1px 0 #c4c4c4"></div>
<svg width="19" height="19" viewBox="0 0 19 19" style="left:358.3px;top:371.5px;"><text x="9.5" y="9" font-size="5.5" font-weight="bold" text-anchor="middle" fill="#111">D</text><path d="M3.5 11h12" stroke="#111" stroke-width="1"/><circle cx="3.5" cy="11" r="1.1" fill="#0e6a30"/><circle cx="15.5" cy="11" r="1.1" fill="#0e6a30"/></svg>
<div class="a" style="left:377.9px;top:371.5px;width:18.6px;height:18.6px;background:#efefef;border-right:1px solid #8c8c8c;border-bottom:1px solid #8c8c8c;box-shadow:1px 1px 0 #c4c4c4"></div>
<svg width="19" height="19" viewBox="0 0 19 19" style="left:377.9px;top:371.5px;"><path d="M3.5 13.5L13 4.5M3.5 13.5h11" stroke="#111" stroke-width="1"/><text x="11" y="11" font-size="5" font-weight="bold" fill="#111">A</text><circle cx="3.5" cy="13.5" r="1.1" fill="#0e6a30"/><circle cx="13" cy="4.5" r="1.1" fill="#0e6a30"/><circle cx="14.5" cy="13.5" r="1.1" fill="#0e6a30"/></svg>
<div class="a" style="left:397.4px;top:371.5px;width:18.6px;height:18.6px;background:#efefef;border-right:1px solid #8c8c8c;border-bottom:1px solid #8c8c8c;box-shadow:1px 1px 0 #c4c4c4"></div>
<svg width="19" height="19" viewBox="0 0 19 19" style="left:397.4px;top:371.5px;"><circle cx="9.5" cy="9.5" r="4.3" fill="none" stroke="#0a3a1a" stroke-width="2.6"/></svg>
<div class="a" style="left:417.0px;top:371.5px;width:18.6px;height:18.6px;background:#efefef;border-right:1px solid #8c8c8c;border-bottom:1px solid #8c8c8c;box-shadow:1px 1px 0 #c4c4c4"></div>
<svg width="19" height="19" viewBox="0 0 19 19" style="left:417.0px;top:371.5px;"><rect x="2.5" y="6" width="14" height="7" rx="3.5" fill="none" stroke="#111" stroke-width="1"/><circle cx="2.5" cy="9.5" r="1.1" fill="#0e6a30"/><circle cx="16.5" cy="9.5" r="1.1" fill="#0e6a30"/><circle cx="7" cy="6" r="1.1" fill="#0e6a30"/><circle cx="12" cy="13" r="1.1" fill="#0e6a30"/></svg>
<div class="a" style="left:241.0px;top:390.2px;width:18.6px;height:18.6px;background:#efefef;border-right:1px solid #8c8c8c;border-bottom:1px solid #8c8c8c;box-shadow:1px 1px 0 #c4c4c4"></div>
<svg width="19" height="19" viewBox="0 0 19 19" style="left:241.0px;top:390.2px;"><path d="M2.5 11l4-4h10l-3 5.5h-7z" fill="#0e6a30" stroke="#111" stroke-width="0.6"/></svg>
<div class="a" style="left:260.6px;top:390.2px;width:18.6px;height:18.6px;background:#efefef;border-right:1px solid #8c8c8c;border-bottom:1px solid #8c8c8c;box-shadow:1px 1px 0 #c4c4c4"></div>
<svg width="19" height="19" viewBox="0 0 19 19" style="left:260.6px;top:390.2px;"><ellipse cx="9.5" cy="5.5" rx="4" ry="2" fill="#0e6a30" stroke="#111" stroke-width="0.7"/><path d="M5.5 5.5v9a4 2 0 0 0 8 0v-9" fill="#0e6a30" stroke="#111" stroke-width="0.7"/><path d="M5.5 9.5a4 2 0 0 0 8 0" fill="none" stroke="#111" stroke-width="0.6"/></svg>
<div class="a" style="left:280.1px;top:390.2px;width:18.6px;height:18.6px;background:#efefef;border-right:1px solid #8c8c8c;border-bottom:1px solid #8c8c8c;box-shadow:1px 1px 0 #c4c4c4"></div>
<svg width="19" height="19" viewBox="0 0 19 19" style="left:280.1px;top:390.2px;"><path d="M9.5 4l5 10a5 1.8 0 0 1-10 0z" fill="#0e6a30" stroke="#111" stroke-width="0.6"/></svg>
<div class="a" style="left:299.6px;top:390.2px;width:18.6px;height:18.6px;background:#efefef;border-right:1px solid #8c8c8c;border-bottom:1px solid #8c8c8c;box-shadow:1px 1px 0 #c4c4c4"></div>
<svg width="19" height="19" viewBox="0 0 19 19" style="left:299.6px;top:390.2px;"><path d="M4 12.5l3-5 4 5 4-5" fill="none" stroke="#111" stroke-width="1"/><circle cx="4" cy="12.5" r="1.1" fill="#0e6a30"/><circle cx="7" cy="7.5" r="1.1" fill="#0e6a30"/><circle cx="11" cy="12.5" r="1.1" fill="#0e6a30"/><circle cx="15" cy="7.5" r="1.1" fill="#0e6a30"/></svg>
<div class="a" style="left:319.2px;top:390.2px;width:18.6px;height:18.6px;background:#efefef;border-right:1px solid #8c8c8c;border-bottom:1px solid #8c8c8c;box-shadow:1px 1px 0 #c4c4c4"></div>
<svg width="19" height="19" viewBox="0 0 19 19" style="left:319.2px;top:390.2px;"><path d="M5 12c-3-3 0-7 3-6s3 0 5-1 4 2 2 4-4 1-4 3-4 3-6 0z" fill="none" stroke="#111" stroke-width="1"/><circle cx="8" cy="6" r="1.1" fill="#0e6a30"/><circle cx="13" cy="5" r="1.1" fill="#0e6a30"/><circle cx="15" cy="9" r="1.1" fill="#0e6a30"/><circle cx="11" cy="12.5" r="1.1" fill="#0e6a30"/><circle cx="6" cy="13" r="1.1" fill="#0e6a30"/></svg>
<div class="a" style="left:338.8px;top:390.2px;width:18.6px;height:18.6px;background:#efefef;border-right:1px solid #8c8c8c;border-bottom:1px solid #8c8c8c;box-shadow:1px 1px 0 #c4c4c4"></div>
<svg width="19" height="19" viewBox="0 0 19 19" style="left:338.8px;top:390.2px;"><rect x="4.5" y="3.5" width="10" height="12" rx="1" fill="#777" stroke="#444" stroke-width="0.8"/><rect x="5.5" y="4.5" width="8" height="2.5" fill="#0e6a30"/><rect x="5.5" y="8" width="3.5" height="3" fill="#ddd"/><rect x="10" y="8" width="3.5" height="3" fill="#ddd"/><rect x="5.5" y="11.5" width="3.5" height="3" fill="#ddd"/><rect x="10" y="11.5" width="3.5" height="3" fill="#f33"/></svg>
<div class="a" style="left:241px;top:414.3px;width:25px;height:19px;background:#efefef;border-right:1px solid #8c8c8c;border-bottom:1px solid #8c8c8c;box-shadow:1px 1px 0 #c4c4c4"></div>
<svg width="25" height="19" viewBox="0 0 25 19" style="left:241px;top:414.3px;"><path d="M7 12.5V5.5" stroke="#1a7a3a" stroke-width="1.2"/><path d="M5.3 6.5L7 3.5 8.7 6.5z" fill="#1a7a3a"/><path d="M7 12.5h6.5" stroke="#f11" stroke-width="1.2"/><path d="M12.5 10.8l3 1.7-3 1.7z" fill="#f11"/><path d="M7.5 12l-4 3.5" stroke="#111" stroke-width="1.6"/><text x="8.8" y="9.2" font-size="6" font-weight="bold" fill="#111">O</text></svg>
<svg width="4" height="3" viewBox="0 0 4 3" style="left:261px;top:423.3px;"><path d="M0 0h3.5l-1.75 2.2z" fill="#111"/></svg>
<div class="a" style="left:267px;top:414.3px;width:25px;height:19px;background:#efefef;border-right:1px solid #8c8c8c;border-bottom:1px solid #8c8c8c;box-shadow:1px 1px 0 #c4c4c4"></div>
<svg width="25" height="19" viewBox="0 0 25 19" style="left:267px;top:414.3px;"><path d="M7 12.5V5.5" stroke="#1a7a3a" stroke-width="1.2"/><path d="M5.3 6.5L7 3.5 8.7 6.5z" fill="#1a7a3a"/><path d="M7 12.5h6.5" stroke="#f11" stroke-width="1.2"/><path d="M12.5 10.8l3 1.7-3 1.7z" fill="#f11"/><path d="M7.5 12l-4 3.5" stroke="#111" stroke-width="1.6"/><text x="8.8" y="9.2" font-size="6" font-weight="bold" fill="#111">S</text></svg>
<svg width="4" height="3" viewBox="0 0 4 3" style="left:287px;top:423.3px;"><path d="M0 0h3.5l-1.75 2.2z" fill="#111"/></svg>
<div class="a" style="left:293px;top:414.3px;width:19px;height:19px;background:#efefef;border-right:1px solid #8c8c8c;border-bottom:1px solid #8c8c8c;box-shadow:1px 1px 0 #c4c4c4"></div>
<svg width="25" height="19" viewBox="0 0 25 19" style="left:293px;top:414.3px;"><path d="M7 12.5V5.5" stroke="#1a7a3a" stroke-width="1.2"/><path d="M5.3 6.5L7 3.5 8.7 6.5z" fill="#1a7a3a"/><path d="M7 12.5h6.5" stroke="#f11" stroke-width="1.2"/><path d="M12.5 10.8l3 1.7-3 1.7z" fill="#f11"/><path d="M7.5 12l-4 3.5" stroke="#111" stroke-width="1.6"/><text x="8.8" y="9.2" font-size="6" font-weight="bold" fill="#111"></text><rect x="8.5" y="3.5" width="6" height="5.5" fill="none" stroke="#111" stroke-width="1.3"/><path d="M10 3.5v2.5h3V3.5" stroke="#111" stroke-width="0.8" fill="none"/></svg>
<div class="a" style="left:241px;top:433.5px;width:25px;height:19px;background:#efefef;border-right:1px solid #8c8c8c;border-bottom:1px solid #8c8c8c;box-shadow:1px 1px 0 #c4c4c4"></div>
<svg width="25" height="19" viewBox="0 0 25 19" style="left:241px;top:433.5px;"><path d="M7 12.5V5.5" stroke="#1a7a3a" stroke-width="1.2"/><path d="M5.3 6.5L7 3.5 8.7 6.5z" fill="#1a7a3a"/><path d="M7 12.5h6.5" stroke="#f11" stroke-width="1.2"/><path d="M12.5 10.8l3 1.7-3 1.7z" fill="#f11"/><path d="M7.5 12l-4 3.5" stroke="#111" stroke-width="1.6"/><text x="8.8" y="9.2" font-size="6" font-weight="bold" fill="#111">L</text></svg>
<svg width="4" height="3" viewBox="0 0 4 3" style="left:261px;top:442.5px;"><path d="M0 0h3.5l-1.75 2.2z" fill="#111"/></svg>
<div class="a" style="left:267px;top:433.5px;width:25px;height:19px;background:#efefef;border-right:1px solid #8c8c8c;border-bottom:1px solid #8c8c8c;box-shadow:1px 1px 0 #c4c4c4"></div>
<svg width="25" height="19" viewBox="0 0 25 19" style="left:267px;top:433.5px;"><path d="M7 12.5V5.5" stroke="#1a7a3a" stroke-width="1.2"/><path d="M5.3 6.5L7 3.5 8.7 6.5z" fill="#1a7a3a"/><path d="M7 12.5h6.5" stroke="#f11" stroke-width="1.2"/><path d="M12.5 10.8l3 1.7-3 1.7z" fill="#f11"/><path d="M7.5 12l-4 3.5" stroke="#111" stroke-width="1.6"/><text x="8.8" y="9.2" font-size="6" font-weight="bold" fill="#111">3D</text></svg>
<svg width="4" height="3" viewBox="0 0 4 3" style="left:287px;top:442.5px;"><path d="M0 0h3.5l-1.75 2.2z" fill="#111"/></svg>
<div class="a" style="left:321px;top:414.3px;width:19px;height:19px;background:#efefef;border-right:1px solid #8c8c8c;border-bottom:1px solid #8c8c8c;box-shadow:1px 1px 0 #c4c4c4"></div>
<svg width="19" height="19" viewBox="0 0 19 19" style="left:321px;top:414.3px;"><path d="M3 3.5h3.5" stroke="#f11" stroke-width="1.4"/><path d="M6 2l2 1.5-2 1.5z" fill="#f11"/><rect x="9" y="7" width="7" height="8" fill="#cfe2d6" stroke="#8ab09a" stroke-width="0.5"/><rect x="3" y="6.5" width="7" height="8.5" fill="#1d7044"/><text x="6.5" y="13.3" font-size="5.5" font-weight="bold" fill="#fff" text-anchor="middle">X</text></svg>
<div class="a" style="left:341px;top:414.3px;width:19px;height:19px;background:#efefef;border-right:1px solid #8c8c8c;border-bottom:1px solid #8c8c8c;box-shadow:1px 1px 0 #c4c4c4"></div>
<svg width="19" height="19" viewBox="0 0 19 19" style="left:341px;top:414.3px;"><path d="M3 3.5h3.5" stroke="#f11" stroke-width="1.4"/><path d="M6 2l2 1.5-2 1.5z" fill="#f11"/><rect x="9" y="7" width="7" height="8" fill="#c8d4ec" stroke="#8aa0c8" stroke-width="0.5"/><rect x="3" y="6.5" width="7" height="8.5" fill="#2a56a8"/><text x="6.5" y="13.3" font-size="5.5" font-weight="bold" fill="#fff" text-anchor="middle">W</text></svg>
<div class="a" style="left:360.5px;top:414.3px;width:19px;height:19px;background:#efefef;border-right:1px solid #8c8c8c;border-bottom:1px solid #8c8c8c;box-shadow:1px 1px 0 #c4c4c4"></div>
<svg width="19" height="19" viewBox="0 0 19 19" style="left:360.5px;top:414.3px;"><path d="M3 3.5h3.5" stroke="#f11" stroke-width="1.4"/><path d="M6 2l2 1.5-2 1.5z" fill="#f11"/><rect x="3" y="7" width="13" height="8" fill="#4aaa88"/><text x="5" y="14" font-size="7" font-weight="bold" fill="#fff" stroke="#111" stroke-width="0.4">A</text><path d="M10 9h5M10 11h5M10 13h5" stroke="#d8f0e8" stroke-width="0.8"/></svg>
<div class="a" style="left:321px;top:433.5px;width:19px;height:19px;background:#efefef;border-right:1px solid #8c8c8c;border-bottom:1px solid #8c8c8c;box-shadow:1px 1px 0 #c4c4c4"></div>
<svg width="19" height="19" viewBox="0 0 19 19" style="left:321px;top:433.5px;"><path d="M3 3.5h3.5" stroke="#f11" stroke-width="1.4"/><path d="M6 2l2 1.5-2 1.5z" fill="#f11"/><rect x="3.5" y="7" width="12" height="8" fill="#fff" stroke="#333" stroke-width="0.9"/><text x="9.5" y="10.5" font-size="3.5" font-weight="bold" fill="#333" text-anchor="middle">TXT</text><path d="M5 12.5h9M5 14h9" stroke="#555" stroke-width="0.6"/></svg>
<div class="a" style="left:341px;top:433.5px;width:19px;height:19px;background:#efefef;border-right:1px solid #8c8c8c;border-bottom:1px solid #8c8c8c;box-shadow:1px 1px 0 #c4c4c4"></div>
<svg width="19" height="19" viewBox="0 0 19 19" style="left:341px;top:433.5px;"><circle cx="5" cy="3.5" r="1.4" fill="none" stroke="#f11" stroke-width="1"/><rect x="9" y="7" width="7" height="8" fill="#cfe2d6" stroke="#8ab09a" stroke-width="0.5"/><rect x="3" y="6.5" width="7" height="8.5" fill="#1d7044"/><text x="6.5" y="13.3" font-size="5.5" font-weight="bold" fill="#fff" text-anchor="middle">X</text></svg>
<div class="a" style="left:390px;top:414.3px;width:18.6px;height:19px;background:#efefef;border-right:1px solid #8c8c8c;border-bottom:1px solid #8c8c8c;box-shadow:1px 1px 0 #c4c4c4"></div>
<svg width="18.6" height="19" viewBox="0 0 18.6 19" style="left:390px;top:414.3px;"><rect x="4" y="5.5" width="3.7" height="7.5" fill="#f11"/><rect x="7.7" y="5.5" width="3.7" height="7.5" fill="#1c1"/><rect x="11.4" y="5.5" width="3.7" height="7.5" fill="#11f"/></svg>
<div class="a" style="left:409px;top:414.3px;width:26px;height:19px;background:#efefef;border-right:1px solid #8c8c8c;border-bottom:1px solid #8c8c8c;box-shadow:1px 1px 0 #c4c4c4"></div>
<svg width="26" height="19" viewBox="0 0 26 19" style="left:409px;top:414.3px;"><path d="M4 7V4.5h3M12 4.5h3V7M4 12v2.5h3M12 14.5h3V12" stroke="#111" stroke-width="1" fill="none"/><path d="M9.5 4v11M3.5 9.5h12" stroke="#f55" stroke-width="0.9"/></svg>
<svg width="4" height="3" viewBox="0 0 4 3" style="left:430px;top:423.3px;"><path d="M0 0h3.5l-1.75 2.2z" fill="#111"/></svg>
<div class="a" style="left:390px;top:433.5px;width:18.6px;height:19px;background:#efefef;border-right:1px solid #8c8c8c;border-bottom:1px solid #8c8c8c;box-shadow:1px 1px 0 #c4c4c4"></div>
<svg width="18.6" height="19" viewBox="0 0 18.6 19" style="left:390px;top:433.5px;"><path d="M3 6h7M12.5 6v8" stroke="#111" stroke-width="0.9"/><path d="M7.5 4.5l2 1.5-2 1.5zM11 12l1.5 2.5 1.5-2.5z" fill="#111"/><circle cx="12.5" cy="6.5" r="1.3" fill="#f11"/></svg>
<div class="a" style="left:409px;top:433.5px;width:26px;height:19px;background:#efefef;border-right:1px solid #8c8c8c;border-bottom:1px solid #8c8c8c;box-shadow:1px 1px 0 #c4c4c4"></div>
<svg width="26" height="19" viewBox="0 0 26 19" style="left:409px;top:433.5px;"><path d="M2.5 8l7-5 7 5z" fill="#f11"/><rect x="4" y="8" width="11" height="7" fill="#111"/><rect x="5.5" y="9.5" width="3" height="2" fill="#fff"/><rect x="9.5" y="9.5" width="3.5" height="5" fill="#fff"/><rect x="5.5" y="12" width="3" height="2" fill="#fff"/><rect x="12.5" y="3.5" width="1.5" height="3" fill="#111"/></svg>
<svg width="4" height="3" viewBox="0 0 4 3" style="left:430px;top:442.5px;"><path d="M0 0h3.5l-1.75 2.2z" fill="#111"/></svg>
<div class="a" style="left:438px;top:25px;width:391px;height:183px;background:#f0f0f0"></div>
<div class="a" style="left:437px;top:25px;width:3px;height:455px;background:linear-gradient(90deg,#dcdcdc,#d0d0d0)"></div>
<div class="a" style="left:440px;top:24px;width:161px;height:104px;border:1px solid #8a8a8a;box-shadow:inset 1px 1px 0 #fff,1px 1px 0 #fff"></div>
<div class="a" style="left:604px;top:24px;width:110px;height:104px;border:1px solid #8a8a8a;box-shadow:inset 1px 1px 0 #fff,1px 1px 0 #fff"></div>
<div class="a" style="left:715px;top:24px;width:111px;height:104px;border:1px solid #8a8a8a;box-shadow:inset 1px 1px 0 #fff,1px 1px 0 #fff"></div>
<div class="a" style="left:470px;top:31.5px;width:102px;height:22px;background:#000;box-shadow:-1px 0 0 #6a6a6a,0 1px 0 #8a8a8a,1px 0 0 #9a9a9a"></div>
<div class="a" style="left:443px;top:30px;width:25px;height:24.5px;background:#fff;border:1px solid #8c8c8c;border-radius:2px"></div>
<div class="t" style="left:450.5px;top:34.3px;font-size:15.3px;font-weight:bold;color:#0a2a9a">X</div>
<div class="t" style="left:461px;top:43.2px;font-size:8.2px;font-weight:bold;color:#0a2a9a">0</div>
<div class="a" style="left:574px;top:30px;width:24px;height:24.5px;background:#fff;border:1px solid #8c8c8c;border-radius:1px"></div>
<div class="t" style="left:582.6px;top:33px;font-size:9.5px;font-weight:bold;color:#0a2a9a">X</div>
<div class="a" style="left:580px;top:42px;width:11.5px;height:1.4px;background:#0a2a9a"></div>
<div class="t" style="left:583.2px;top:44px;font-size:9.5px;font-weight:bold;color:#0a2a9a">2</div>
<div class="t" style="left:522.5px;top:34.2px;font-size:19px;font-weight:bold;color:#2af22a;-webkit-text-stroke:0.3px #2af22a;letter-spacing:-0.05px">0.000</div>
<div class="a" style="left:470px;top:58.5px;width:102px;height:22px;background:#000;box-shadow:-1px 0 0 #6a6a6a,0 1px 0 #8a8a8a,1px 0 0 #9a9a9a"></div>
<div class="a" style="left:443px;top:57px;width:25px;height:24.5px;background:#fff;border:1px solid #8c8c8c;border-radius:2px"></div>
<div class="t" style="left:450.5px;top:61.3px;font-size:15.3px;font-weight:bold;color:#0a2a9a">Y</div>
<div class="t" style="left:461px;top:70.2px;font-size:8.2px;font-weight:bold;color:#0a2a9a">0</div>
<div class="a" style="left:574px;top:57px;width:24px;height:24.5px;background:#fff;border:1px solid #8c8c8c;border-radius:1px"></div>
<div class="t" style="left:582.6px;top:60px;font-size:9.5px;font-weight:bold;color:#0a2a9a">Y</div>
<div class="a" style="left:580px;top:69px;width:11.5px;height:1.4px;background:#0a2a9a"></div>
<div class="t" style="left:583.2px;top:71px;font-size:9.5px;font-weight:bold;color:#0a2a9a">2</div>
<div class="t" style="left:522.5px;top:61.2px;font-size:19px;font-weight:bold;color:#2af22a;-webkit-text-stroke:0.3px #2af22a;letter-spacing:-0.05px">0.000</div>
<div class="a" style="left:470px;top:85.5px;width:102px;height:22px;background:#000;box-shadow:-1px 0 0 #6a6a6a,0 1px 0 #8a8a8a,1px 0 0 #9a9a9a"></div>
<div class="a" style="left:443px;top:84px;width:25px;height:24.5px;background:#fff;border:1px solid #8c8c8c;border-radius:2px"></div>
<div class="t" style="left:450.5px;top:88.3px;font-size:15.3px;font-weight:bold;color:#0a2a9a">Z</div>
<div class="t" style="left:461px;top:97.2px;font-size:8.2px;font-weight:bold;color:#0a2a9a">0</div>
<div class="a" style="left:574px;top:84px;width:24px;height:24.5px;background:#fff;border:1px solid #8c8c8c;border-radius:1px"></div>
<div class="t" style="left:582.6px;top:87px;font-size:9.5px;font-weight:bold;color:#0a2a9a">Z</div>
<div class="a" style="left:580px;top:96px;width:11.5px;height:1.4px;background:#0a2a9a"></div>
<div class="t" style="left:583.2px;top:98px;font-size:9.5px;font-weight:bold;color:#0a2a9a">2</div>
<div class="t" style="left:522.5px;top:88.2px;font-size:19px;font-weight:bold;color:#2af22a;-webkit-text-stroke:0.3px #2af22a;letter-spacing:-0.05px">0.000</div>
<div class="a" style="left:607px;top:26px;width:85px;height:78px;background:#000"></div>
<svg width="86" height="78" viewBox="0 0 86 78" style="left:606px;top:26px;"><circle cx="43" cy="39" r="38" fill="none" stroke="#1818f8" stroke-width="1.3"/>
<circle cx="43" cy="39" r="18.3" fill="none" stroke="#ee1040" stroke-width="1.3"/>
<path d="M13.5 2.5Q8 4 6.5 9" fill="none" stroke="#28a8f0" stroke-width="2"/><path d="M3.5 8.5l3.5 3.5 3-4z" fill="#28a8f0"/>
<path d="M72.5 2.5Q78 4 79.5 9" fill="none" stroke="#28a8f0" stroke-width="2"/><path d="M82.5 8.5l-3.5 3.5-3-4z" fill="#28a8f0"/></svg>
<div class="a" style="left:605.5px;top:106px;width:20.5px;height:20.5px;border:1.5px solid #f08a20;background:#eaeaea"></div>
<svg width="90" height="30" viewBox="0 0 90 30" style="left:602px;top:100px;"><circle cx="13.8" cy="16.3" r="7.2" fill="#1a98f0" stroke="#333" stroke-width="0.5"/><circle cx="13.8" cy="16.3" r="2.3" fill="#fff" stroke="#333" stroke-width="0.4"/>
<circle cx="36.2" cy="16.3" r="7.2" fill="#fff" stroke="#444" stroke-width="0.7"/><circle cx="36.2" cy="16.3" r="5.2" fill="#1a98f0" stroke="#333" stroke-width="0.5"/><circle cx="36.2" cy="16.3" r="2.4" fill="#fff" stroke="#333" stroke-width="0.4"/>
<circle cx="57" cy="16.3" r="7.2" fill="#fff" stroke="#333" stroke-width="0.7"/><path d="M57 16.3L57 9.1A7.2 7.2 0 0 1 63.2 12.7zM57 16.3L63.2 19.9A7.2 7.2 0 0 1 57 23.5zM57 16.3L50.8 19.9A7.2 7.2 0 0 1 50.8 12.7z" fill="#1a98f0"/><path d="M57 9.1v14.4M50.8 12.7l12.4 7.2M50.8 19.9l12.4-7.2" stroke="#333" stroke-width="0.5"/><circle cx="57" cy="16.3" r="2" fill="#fff" stroke="#333" stroke-width="0.4"/>
<circle cx="77.4" cy="16.3" r="7.2" fill="#fff" stroke="#333" stroke-width="0.7"/><path d="M77.4 9.1A7.2 7.2 0 0 1 84.6 16.3L81.6 16.3A4.2 4.2 0 0 0 77.4 12.1z M77.4 23.5A7.2 7.2 0 0 1 70.2 16.3L73.2 16.3A4.2 4.2 0 0 0 77.4 20.5z" fill="#1a98f0"/><circle cx="77.4" cy="16.3" r="4.2" fill="none" stroke="#333" stroke-width="0.5"/><path d="M77.4 9.1v14.4M70.2 16.3h14.4M72.3 11.2l10.2 10.2M82.5 11.2l-10.2 10.2" stroke="#333" stroke-width="0.4"/><circle cx="77.4" cy="16.3" r="1.8" fill="#fff" stroke="#333" stroke-width="0.4"/></svg>
<div class="a" style="left:699px;top:29px;width:8px;height:7.5px;background:linear-gradient(#e8e8e8,#d0d0d0);border:1px solid #a8a8a8"></div>
<div class="t" style="left:701px;top:40.5px;font-size:6.5px;color:#333">0</div>
<div class="a" style="left:702px;top:50px;width:1.5px;height:30px;background:#d8d8d8;border-right:1px solid #fff"></div>
<div class="a" style="left:696.5px;top:78.5px;width:12px;height:6.5px;background:linear-gradient(#f4f4f4,#d8d8d8);border:1px solid #909090;border-radius:1.5px"></div>
<div class="a" style="left:695.5px;top:93.5px;width:16px;height:9.5px;background:linear-gradient(#fafafa,#e0e0e0);border:1px solid #8a8a8a;border-radius:1.5px"></div>
<div class="t" style="left:697.5px;top:95.5px;font-size:6.6px;color:#111;letter-spacing:-0.2px">OFF</div>
<div class="a" style="left:740px;top:35px;width:14.5px;height:14.2px;background:#fafafa;box-shadow:0 0 0 0.5px #e4e4e4"></div>
<div class="a" style="left:724px;top:50.5px;width:14.5px;height:14.2px;background:#fafafa;box-shadow:0 0 0 0.5px #e4e4e4"></div>
<div class="a" style="left:740px;top:50.5px;width:14.5px;height:14.2px;background:#fafafa;box-shadow:0 0 0 0.5px #e4e4e4"></div>
<div class="a" style="left:756px;top:50.5px;width:14.5px;height:14.2px;background:#fafafa;box-shadow:0 0 0 0.5px #e4e4e4"></div>
<div class="a" style="left:740px;top:65.5px;width:14.5px;height:14.2px;background:#fafafa;box-shadow:0 0 0 0.5px #e4e4e4"></div>
<div class="a" style="left:777.5px;top:35px;width:14.5px;height:14.2px;background:#fafafa;box-shadow:0 0 0 0.5px #e4e4e4"></div>
<div class="a" style="left:777.5px;top:65.5px;width:14.5px;height:14.2px;background:#fafafa;box-shadow:0 0 0 0.5px #e4e4e4"></div>
<div class="a" style="left:740px;top:50.5px;width:14.5px;height:14.2px;background:#ececec"></div>
<svg width="80" height="52" viewBox="0 0 80 52" style="left:720px;top:30px;"><defs><linearGradient id="ga" x1="0" y1="0" x2="0" y2="1"><stop offset="0" stop-color="#38a8f0"/><stop offset="1" stop-color="#d8f0ff"/></linearGradient><linearGradient id="gb" x1="0" y1="0" x2="0" y2="1"><stop offset="0" stop-color="#d8f0ff"/><stop offset="1" stop-color="#38a8f0"/></linearGradient><linearGradient id="gc" x1="0" y1="0" x2="1" y2="0"><stop offset="0" stop-color="#38a8f0"/><stop offset="1" stop-color="#d8f0ff"/></linearGradient><linearGradient id="gd" x1="0" y1="0" x2="1" y2="0"><stop offset="0" stop-color="#d8f0ff"/><stop offset="1" stop-color="#38a8f0"/></linearGradient></defs>
<path d="M27.5 6.8L21.2 17.4h12.6z" fill="url(#ga)" stroke="#2a2a2a" stroke-width="0.8"/>
<path d="M6 27.5L16.5 21.8v11.4z" fill="url(#gc)" stroke="#2a2a2a" stroke-width="0.8"/>
<path d="M49 27.5L38.5 21.8v11.4z" fill="url(#gd)" stroke="#2a2a2a" stroke-width="0.8"/>
<path d="M27.5 48.5L21.2 38.5h12.6z" fill="url(#gb)" stroke="#2a2a2a" stroke-width="0.8"/>
<path d="M65 6.5L59 13h3.3v6.5h5.4V13H71z" fill="url(#ga)" stroke="#2a2a2a" stroke-width="0.8"/>
<path d="M65 48.5L59 42h3.3v-6.5h5.4V42H71z" fill="url(#gb)" stroke="#2a2a2a" stroke-width="0.8"/>
</svg>
<div class="t" style="left:803px;top:30px;font-size:6.8px;color:#222;letter-spacing:-0.1px">21.63</div>
<div class="a" style="left:810.5px;top:41px;width:1.5px;height:35px;background:#d4d4d4;border-right:1px solid #fff"></div>
<div class="a" style="left:804.5px;top:59.5px;width:13.5px;height:7.5px;background:linear-gradient(#f4f4f4,#d8d8d8);border:1px solid #909090;border-radius:1.5px"></div>
<div class="t" style="left:724px;top:91px;font-size:6.8px;color:#222;letter-spacing:-0.1px">75.63</div>
<div class="a" style="left:748px;top:92.5px;width:43px;height:1.5px;background:#d4d4d4;border-bottom:1px solid #fff"></div>
<div class="a" style="left:780.5px;top:87.5px;width:6.5px;height:12px;background:linear-gradient(90deg,#f4f4f4,#d8d8d8);border:1px solid #909090;border-radius:1.5px"></div>
<div class="a" style="left:801px;top:86.5px;width:20.5px;height:15px;background:linear-gradient(#fafafa,#e4e4e4);border:1px solid #8a8a8a;border-radius:2px"></div>
<div class="t" style="left:804px;top:90.5px;font-size:7px;color:#000">设置</div>
<div class="a" style="left:725px;top:109px;width:7.5px;height:7.5px;background:linear-gradient(#e8e8e8,#f8f8f8);border:1px solid #a0a0a0"></div>
<div class="t" style="left:734px;top:110px;font-size:7px;color:#000">点动</div>
<div class="a" style="left:756px;top:106.5px;width:29px;height:13px;background:#f0f0f0;border:1px solid #b8b8b8"></div>
<div class="t" style="left:760px;top:109px;font-size:6.8px;color:#9a9a9a">0.0010</div>
<div class="t" style="left:790.5px;top:111px;font-size:6px;color:#222">mm</div>
<div class="t" style="left:444px;top:131px;font-size:7.2px">圆<span style="color:#1a3a9a">1</span></div>
<div class="a" style="left:444px;top:139px;width:13px;height:1px;background:#909090"></div>
<div class="t" style="left:639px;top:131px;font-size:7.8px;color:#111;letter-spacing:0.6px">参考坐标系：</div>
<div class="t" style="left:694px;top:131px;font-size:7.8px;color:#ee66ee;letter-spacing:1.2px"><u>机械坐标系</u></div>
<div class="a" style="left:440px;top:140px;width:387px;height:56px;background:#fff;border:1px solid #8c8c8c"></div>
<div class="a" style="left:441px;top:141px;width:376px;height:12.5px;background:#efefef"></div>
<div class="a" style="left:498.5px;top:141px;width:1px;height:54px;background:#eaeaea"></div>
<div class="a" style="left:542.5px;top:141px;width:1px;height:54px;background:#eaeaea"></div>
<div class="a" style="left:585.5px;top:141px;width:1px;height:54px;background:#eaeaea"></div>
<div class="a" style="left:628.5px;top:141px;width:1px;height:54px;background:#eaeaea"></div>
<div class="a" style="left:671px;top:141px;width:1px;height:54px;background:#eaeaea"></div>
<div class="a" style="left:714.5px;top:141px;width:1px;height:54px;background:#eaeaea"></div>
<div class="a" style="left:748px;top:141px;width:1px;height:54px;background:#eaeaea"></div>
<div class="a" style="left:441px;top:162.7px;width:376px;height:1px;background:#ececec"></div>
<div class="a" style="left:441px;top:171.9px;width:376px;height:1px;background:#ececec"></div>
<div class="a" style="left:441px;top:181.1px;width:376px;height:1px;background:#ececec"></div>
<div class="a" style="left:441px;top:190.3px;width:376px;height:1px;background:#ececec"></div>
<div class="t" style="left:463px;top:143.8px;font-size:7px;color:#111">内容</div>
<div class="t" style="left:509.5px;top:143.8px;font-size:7px;color:#111">测量值</div>
<div class="t" style="left:552.5px;top:143.8px;font-size:7px;color:#111">标准值</div>
<div class="t" style="left:596px;top:143.8px;font-size:7px;color:#111">误差值</div>
<div class="t" style="left:638.5px;top:143.8px;font-size:7px;color:#111">上公差</div>
<div class="t" style="left:681px;top:143.8px;font-size:7px;color:#111">下公差</div>
<div class="t" style="left:724px;top:143.8px;font-size:7px;color:#111">状态</div>
<svg width="7" height="7" viewBox="0 0 7 7" style="left:444px;top:155.3px;"><rect x="0.5" y="0.5" width="6.3" height="6.3" fill="#fff" stroke="#222" stroke-width="1"/><path d="M1.5 3.5l1.7 2 2.8-4.3" stroke="#111" stroke-width="1" fill="none"/></svg>
<div class="t" style="left:451px;top:155.1px;font-size:7.2px">圆心<span style="color:#2a3a9a">X</span></div>
<div class="t" style="left:511.5px;top:155.5px;width:30px;text-align:right;font-size:7.2px;color:#2a2a3a">-0.511</div>
<div class="t" style="left:554.5px;top:155.5px;width:30px;text-align:right;font-size:7.2px;color:#2a2a3a">-0.511</div>
<div class="t" style="left:597.5px;top:155.5px;width:30px;text-align:right;font-size:7.2px;color:#2a2a3a">0.000</div>
<svg width="7" height="7" viewBox="0 0 7 7" style="left:444px;top:164.5px;"><rect x="0.5" y="0.5" width="6.3" height="6.3" fill="#fff" stroke="#222" stroke-width="1"/><path d="M1.5 3.5l1.7 2 2.8-4.3" stroke="#111" stroke-width="1" fill="none"/></svg>
<div class="t" style="left:451px;top:164.29999999999998px;font-size:7.2px">圆心<span style="color:#2a3a9a">Y</span></div>
<div class="t" style="left:511.5px;top:164.7px;width:30px;text-align:right;font-size:7.2px;color:#2a2a3a">0.333</div>
<div class="t" style="left:554.5px;top:164.7px;width:30px;text-align:right;font-size:7.2px;color:#2a2a3a">0.333</div>
<div class="t" style="left:597.5px;top:164.7px;width:30px;text-align:right;font-size:7.2px;color:#2a2a3a">0.000</div>
<svg width="7" height="7" viewBox="0 0 7 7" style="left:444px;top:173.70000000000002px;"><rect x="0.5" y="0.5" width="6.3" height="6.3" fill="#fff" stroke="#222" stroke-width="1"/><path d="M1.5 3.5l1.7 2 2.8-4.3" stroke="#111" stroke-width="1" fill="none"/></svg>
<div class="t" style="left:451px;top:173.5px;font-size:7.2px">直径</div>
<div class="t" style="left:511.5px;top:173.9px;width:30px;text-align:right;font-size:7.2px;color:#2a2a3a">0.163</div>
<div class="t" style="left:554.5px;top:173.9px;width:30px;text-align:right;font-size:7.2px;color:#2a2a3a">0.163</div>
<div class="t" style="left:597.5px;top:173.9px;width:30px;text-align:right;font-size:7.2px;color:#2a2a3a">0.000</div>
<svg width="7" height="7" viewBox="0 0 7 7" style="left:444px;top:182.9px;"><rect x="0.5" y="0.5" width="6.3" height="6.3" fill="#fff" stroke="#222" stroke-width="1"/><path d="M1.5 3.5l1.7 2 2.8-4.3" stroke="#111" stroke-width="1" fill="none"/></svg>
<div class="t" style="left:451px;top:182.7px;font-size:7.2px">真圆度</div>
<div class="t" style="left:511.5px;top:183.1px;width:30px;text-align:right;font-size:7.2px;color:#2a2a3a">0.004</div>
<div class="t" style="left:554.5px;top:183.1px;width:30px;text-align:right;font-size:7.2px;color:#2a2a3a">0.004</div>
<div class="t" style="left:597.5px;top:183.1px;width:30px;text-align:right;font-size:7.2px;color:#2a2a3a">0.000</div>
<svg width="7" height="7" viewBox="0 0 7 7" style="left:444px;top:192.10000000000002px;"><rect x="0.5" y="0.5" width="6.3" height="6.3" fill="#fff" stroke="#222" stroke-width="1"/><path d="M1.5 3.5l1.7 2 2.8-4.3" stroke="#111" stroke-width="1" fill="none"/></svg>
<div class="t" style="left:451px;top:191.9px;font-size:7.2px">位置度</div>
<div class="t" style="left:511.5px;top:192.3px;width:30px;text-align:right;font-size:7.2px;color:#2a2a3a">0.000</div>
<div class="t" style="left:554.5px;top:192.3px;width:30px;text-align:right;font-size:7.2px;color:#2a2a3a">0.000</div>
<div class="t" style="left:597.5px;top:192.3px;width:30px;text-align:right;font-size:7.2px;color:#2a2a3a">0.000</div>
<div class="a" style="left:441px;top:195px;width:386px;height:1px;background:#8c8c8c"></div>
<div class="a" style="left:817px;top:141px;width:9px;height:54px;background:#f0f0f0;border-left:1px solid #e4e4e4"></div>
<svg width="9" height="54" viewBox="0 0 9 54" style="left:817px;top:141px;"><path d="M2.5 5.5L4.5 3.5 6.5 5.5z" fill="#222"/><path d="M2.5 48.5L4.5 50.5 6.5 48.5z" fill="#222"/></svg>
<div class="a" style="left:818px;top:150px;width:7.5px;height:21px;background:linear-gradient(90deg,#f4f4f4,#dcdcdc);border:1px solid #9a9a9a;border-radius:1.5px"></div>
<svg width="8" height="21" viewBox="0 0 8 21" style="left:818px;top:150px;"><path d="M2 9h3.5M2 10.5h3.5M2 12h3.5" stroke="#555" stroke-width="0.6"/></svg>
<div class="a" style="left:438px;top:196px;width:388px;height:11px;background:#dcdcdc;border-top:1px solid #a0a0a0"></div>
<svg width="8" height="9" viewBox="0 0 8 9" style="left:441px;top:197px;"><rect x="0.5" y="0.5" width="7" height="8" fill="#f4f4f4" stroke="#a0a0a0"/></svg>
<div class="t" style="left:449px;top:198px;font-size:7.2px">全部显示</div>
<div class="a" style="left:438px;top:207px;width:388px;height:273px;background:#f0f0f0"></div>
<div class="a" style="left:826px;top:196px;width:3px;height:284px;background:#fff"></div>
<div class="a" style="left:441px;top:207.5px;width:365px;height:273px;background:#fff;border-left:1px solid #808080;border-top:1px solid #808080"></div>
<svg width="365" height="273" viewBox="0 0 365 273" style="left:441px;top:207px;">
<rect x="105.5" y="82.5" width="155.5" height="124" fill="#000" stroke="#22dd22" stroke-width="1"/>
<rect x="151.5" y="120.5" width="64" height="48" fill="#fff" stroke="#22dd22" stroke-width="1"/>

<circle cx="126.3" cy="101.4" r="9" fill="#fff" stroke="#e8e820" stroke-width="1.6"/>
<circle cx="239.8" cy="99.6" r="9" fill="#fff" stroke="#22dd22" stroke-width="0.8"/>
<circle cx="126.3" cy="188.4" r="9" fill="#fff" stroke="#22dd22" stroke-width="0.8"/>
<circle cx="240.4" cy="188.6" r="9" fill="#fff" stroke="#22dd22" stroke-width="0.8"/>
<path d="M35.5 6.5v3.5h58V6.5" fill="none" stroke="#ff5050" stroke-width="1.2"/>
<path d="M184.5 1v272M1 139.5h364" stroke="rgba(255,0,0,0.72)" stroke-width="1"/>
<path d="M182 139.5h5M184.5 137v5" stroke="#fff" stroke-width="1"/>
</svg>
<div class="t" style="left:445px;top:212px;font-size:8.4px;color:#22ee22;letter-spacing:0.3px;-webkit-text-stroke:0.1px #22ee22">52.9X</div>
<div class="t" style="left:492.3px;top:210.2px;font-size:8px;font-weight:bold;color:#ff1111">500um</div>
<div class="a" style="left:806px;top:207px;width:20px;height:273px;background:#f0f0f0"></div>
<div class="a" style="left:810px;top:227.5px;width:16px;height:1px;background:#8a8a8a"></div>
<div class="a" style="left:810px;top:247px;width:16px;height:1px;background:#8a8a8a"></div>
<div class="a" style="left:810px;top:266.5px;width:16px;height:1px;background:#8a8a8a"></div>
<div class="a" style="left:810px;top:286px;width:16px;height:1px;background:#8a8a8a"></div>
<div class="a" style="left:810px;top:305.5px;width:16px;height:1px;background:#8a8a8a"></div>
<div class="a" style="left:810px;top:325px;width:16px;height:1px;background:#8a8a8a"></div>
<div class="a" style="left:810px;top:344.5px;width:16px;height:1px;background:#8a8a8a"></div>
<svg width="19" height="140" viewBox="0 0 19 140" style="left:807px;top:208px;">
<path d="M5.5 10.5h14M12.5 3.5v13" stroke="#111" stroke-width="1.2"/><path d="M14.5 8l3.5-3.5" stroke="#f22" stroke-width="0.9"/><text x="16" y="6.5" font-size="4.5" fill="#f22" font-weight="bold">A</text>
<path d="M9.5 24v13" stroke="#111" stroke-width="1.3"/><path d="M9.5 25.5h10M9.5 30.5h10M9.5 35.5h7" stroke="#f22" stroke-width="1.1"/><path d="M11.5 24.5v2M18.5 24.5v2M11.5 29.5v2M18.5 29.5v2M11.5 34.5v2M16 34.5v2" stroke="#f22" stroke-width="0.9"/>
<path d="M9.5 49.5h10" stroke="#f22" stroke-width="1.3"/><path d="M9.5 47.5v4M19.5 47.5v4" stroke="#a22" stroke-width="1"/>
<path d="M8.5 72.5l7-6.5M8.5 72.5h11" stroke="#111" stroke-width="1.2"/><path d="M12.5 71.5l2.5-4" stroke="#f22" stroke-width="1"/><text x="16" y="69" font-size="5" fill="#f22" font-weight="bold">A</text>
<text x="12.8" y="92.3" font-size="14.5" font-family="Liberation Serif" font-weight="bold" text-anchor="middle" fill="#111" transform="translate(12.8 0) scale(1.15 1) translate(-12.8 0)">T</text>
<path d="M7.5 105.5v-3h3M14.5 102.5h3v3M7.5 109v3h3M14.5 112h3v-3" stroke="#111" stroke-width="2.4" fill="none"/>
<rect x="6.5" y="120.8" width="13" height="14" fill="#f4f4f4" stroke="#2a7a3a" stroke-width="1.2"/>
<g transform="translate(0 0.8)"><circle cx="12" cy="127" r="3" fill="none" stroke="#111" stroke-width="2"/><path d="M12 122v2M12 130v2M7 127h2M15 127h2M8.5 123.5l1.4 1.4M14.1 129.1l1.4 1.4M15.5 123.5l-1.4 1.4M9.9 129.1l-1.4 1.4" stroke="#111" stroke-width="1.8"/></g>
</svg>
<div class="a" style="left:0px;top:480px;width:829px;height:1px;background:#a0a0a0"></div>
<div class="a" style="left:0px;top:481px;width:829px;height:10px;background:#f0ecea"></div>
<div class="a" style="left:0px;top:491px;width:829px;height:1px;background:#a8a8a8"></div>
<div class="a" style="left:0px;top:492px;width:829px;height:1px;background:#fff"></div>
<div class="a" style="left:258.5px;top:481px;width:1px;height:10px;background:#d8d4d0"></div>
<div class="a" style="left:318.5px;top:481px;width:1px;height:10px;background:#d8d4d0"></div>
<div class="a" style="left:501.5px;top:481px;width:1px;height:10px;background:#d8d4d0"></div>
<div class="a" style="left:533px;top:481px;width:1px;height:10px;background:#d8d4d0"></div>
<div class="a" style="left:577.5px;top:481px;width:1px;height:10px;background:#d8d4d0"></div>
<div class="a" style="left:638.5px;top:481px;width:1px;height:10px;background:#d8d4d0"></div>
<div class="t" style="left:261px;top:483.5px;font-size:6.8px;color:#222">0.7x</div>
<div class="t" style="left:321px;top:483.5px;font-size:6.8px;color:#222">A=0,B=0</div>
<div class="t" style="left:382px;top:483px;font-size:7px;color:#222">机械坐标系</div>
<div class="t" style="left:443px;top:483px;font-size:7px;color:#222">坐标系模式2</div>
<div class="t" style="left:504px;top:484px;font-size:6px;color:#222">mm</div>
<div class="t" style="left:537px;top:483px;font-size:7px;color:#222">角度</div>
<div class="t" style="left:580px;top:483px;font-size:7px;color:#222">直角坐标</div>
</body></html>
